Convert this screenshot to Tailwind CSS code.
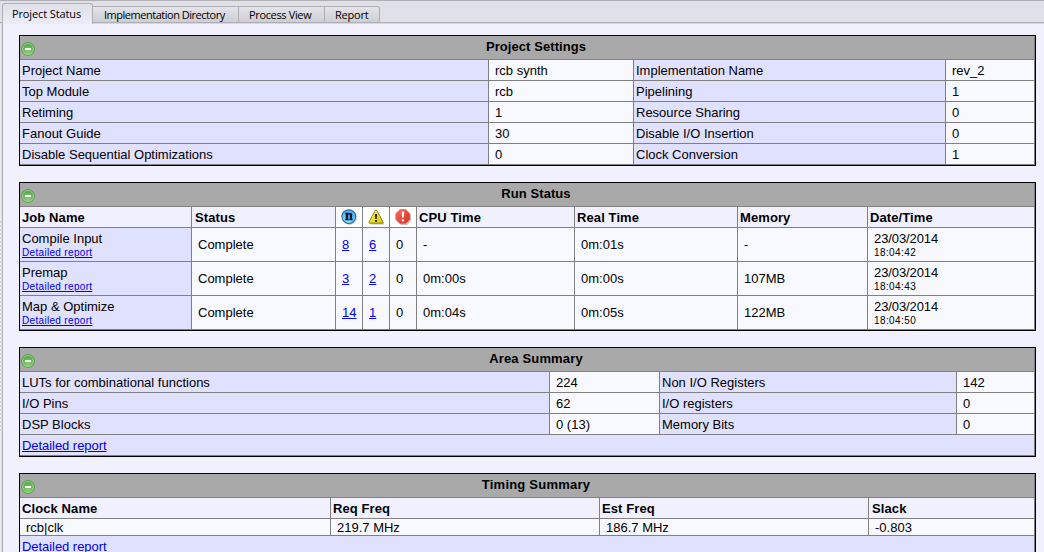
<!DOCTYPE html>
<html lang="en">
<head>
<meta charset="utf-8">
<title>Project Status</title>
<script src="https://cdn.jsdelivr.net/npm/@tailwindcss/browser@4"></script>
</head>
<body class="h-[552px] w-[1044px] overflow-hidden bg-[#f0f0ff] font-['Liberation_Sans',Arial,sans-serif] text-[13px] leading-[22px] text-black">
<svg class="absolute size-0">
  <defs>
    <radialGradient id="gr" cx=".5" cy=".75" r=".75"><stop offset="0" stop-color="#8ccf72"/><stop offset="1" stop-color="#4aa043"/></radialGradient>
    <symbol id="minus" viewBox="0 0 14 14">
      <circle cx="7" cy="7" r="6.5" fill="url(#gr)" stroke="#4d9a47" stroke-width=".8"/>
      <circle cx="7" cy="7" r="5.5" fill="none" stroke="#b5e0a8" stroke-width=".7"/>
      <rect x="4" y="6" width="6" height="2" fill="#fff"/>
    </symbol>
    <linearGradient id="bl" x1="0" y1="0" x2="0" y2="1"><stop offset="0" stop-color="#4fa4e4"/><stop offset="1" stop-color="#7fe6f4"/></linearGradient>
    <linearGradient id="ye" x1="0" y1="0" x2="1" y2="1"><stop offset="0" stop-color="#fff860"/><stop offset="1" stop-color="#d8c400"/></linearGradient>
    <linearGradient id="re" x1="0" y1="0" x2="1" y2="1"><stop offset="0" stop-color="#f87060"/><stop offset="1" stop-color="#d42a20"/></linearGradient>
  </defs>
</svg>
<div class="flex h-[552px] w-[1044px] flex-col overflow-hidden">
  <nav class="flex h-[24px] shrink-0 items-end border-t border-b border-t-[#b0b0b4] border-b-[#d6d6dc] bg-[#e0e0e8] font-['Open_Sans','Noto_Sans',sans-serif] text-[11px]">
    <div class="h-full w-[2px] shrink-0 border-b border-[#b0b0b4]"></div>
    <div class="-mb-px h-[21px] w-[91px] shrink-0 rounded-t-[3px] border border-b-0 border-[#b0b0b4] bg-linear-to-b from-[#e0e0e8] to-[#ececf8] pl-[9px] leading-[20px] tracking-[-0.12px] whitespace-nowrap">Project Status</div>
    <div class="flex h-full grow items-end border-b border-[#b0b0b4]">
      <div class="h-[16px] w-[146px] border-t border-r border-[#b0b0b4] bg-linear-to-b from-[#e4e4ea] to-[#cdcdd4] pl-[11px] leading-[15px] tracking-[-0.48px] whitespace-nowrap">Implementation Directory</div>
      <div class="h-[16px] w-[86px] border-t border-r border-[#b0b0b4] bg-linear-to-b from-[#e4e4ea] to-[#cdcdd4] pl-[10px] leading-[15px] tracking-[-0.35px] whitespace-nowrap">Process View</div>
      <div class="h-[16px] w-[55px] rounded-tr-[3px] border-t border-r border-[#b0b0b4] bg-linear-to-b from-[#e4e4ea] to-[#cdcdd4] pl-[10px] leading-[15px] tracking-[-0.2px] whitespace-nowrap">Report</div>
    </div>
  </nav>
  <div class="flex min-h-0 grow">
  <div class="h-full w-[2px] shrink-0 border-r border-[#dcdce2] bg-[#ececf4] pt-[197px]">
    <div class="h-[212px] w-px bg-[repeating-linear-gradient(to_bottom,#cfcfd4_0_2px,#f4f4f8_2px_4px)]"></div>
  </div>
  <main class="flex grow flex-col gap-4 border-l border-[#b0b0b4] pt-[11px] pl-4">

    <section class="w-[1017px] shrink-0 border border-black bg-[#808080]">
      <header class="grid h-6 grid-cols-[18px_1fr] border-r border-b border-[#808080] bg-[#a9a9a9]">
        <svg class="mt-[6px] ml-px size-[14px]"><use href="#minus"/></svg>
        <h2 class="text-center leading-[22px] font-bold tracking-[0.07px]">Project Settings</h2>
      </header>
      <div class="grid auto-rows-[20px] grid-cols-[468px_144px_311px_88px] gap-px pb-px whitespace-nowrap *:bg-[#f8f8ff] *:pl-[6px] *:odd:bg-[#e0e0ff] *:odd:pl-[2px]">
        <div>Project Name</div><div>rcb synth</div><div>Implementation Name</div><div>rev_2</div>
        <div>Top Module</div><div>rcb</div><div>Pipelining</div><div>1</div>
        <div>Retiming</div><div>1</div><div>Resource Sharing</div><div>0</div>
        <div>Fanout Guide</div><div>30</div><div>Disable I/O Insertion</div><div>0</div>
        <div>Disable Sequential Optimizations</div><div>0</div><div>Clock Conversion</div><div>1</div>
      </div>
    </section>

    <section class="w-[1017px] shrink-0 border border-black bg-[#808080]">
      <header class="grid h-6 grid-cols-[18px_1fr] border-r border-b border-[#808080] bg-[#a9a9a9]">
        <svg class="mt-[6px] ml-px size-[14px]"><use href="#minus"/></svg>
        <h2 class="text-center leading-[22px] font-bold tracking-[0.07px]">Run Status</h2>
      </header>
      <div class="mb-px grid h-5 grid-cols-[171px_143px_26px_26px_26px_157px_162px_129px_166px] gap-px font-bold tracking-[0.1px] whitespace-nowrap *:h-5 *:bg-[#f0f0ff]">
        <div class="pl-[2px]">Job Name</div>
        <div class="pl-[3px]">Status</div>
        <div class="bg-white! pt-[2px] pl-[5px]">
          <svg class="size-4" viewBox="0 0 16 16"><circle cx="8.800" cy="8.800" r="7" fill="#9a9a9a" opacity=".6"/><circle cx="7.800" cy="7.600" r="6.900" fill="url(#bl)" stroke="#2460a8" stroke-width="1.100"/><text x="7.800" y="11.400" text-anchor="middle" font-family="Liberation Serif" font-weight="700" font-size="14" letter-spacing="0" fill="#001028" stroke="#001028" stroke-width=".3">n</text></svg>
        </div>
        <div class="bg-white! pt-[2px] pl-[5px]">
          <svg class="size-4" viewBox="0 0 16 16"><path d="M9.300 2 16 14.200v1.300H2z" fill="#999" opacity=".6"/><path d="M8 .9Q8.600.9 9 1.700L15 13q.5 1.200-.7 1.200H1.700Q.5 14.200 1 13L7 1.700Q7.400.9 8 .9z" fill="url(#ye)" stroke="#8a7c10" stroke-width=".9"/><path d="M7 5h2l-.4 5H7.400z" fill="#111"/><rect x="7.100" y="11" width="1.800" height="1.800" fill="#111"/></svg>
        </div>
        <div class="bg-white! pt-[2px] pl-[5px]">
          <svg class="size-4" viewBox="0 0 16 16"><path d="M6 2h6l4 4v6l-4 4H6l-4-4z" fill="#999" opacity=".6"/><path d="M5 .6h5.600l4.200 4v5.800l-4.200 4.200H5L.8 10.400V4.600z" fill="url(#re)" stroke="#e86055" stroke-width=".7"/><path d="M6.700 2.600h2.500l-.4 6H7.100z" fill="#fff"/><rect x="6.800" y="10.200" width="2.300" height="2.200" rx=".6" fill="#fff"/></svg>
        </div>
        <div class="pl-[2px]">CPU Time</div>
        <div class="pl-[2px]">Real Time</div>
        <div class="pl-[2px]">Memory</div>
        <div class="pl-[2px]">Date/Time</div>
      </div>
      <div class="grid auto-rows-[33px] grid-cols-[171px_143px_26px_26px_26px_157px_162px_129px_166px] gap-px pb-px leading-[33px] whitespace-nowrap *:bg-[#f8f8ff] *:pl-[6px]">
        <div class="flex flex-col bg-[#e0e0ff]! pt-[2px] pl-[2px]!"><span class="h-[17px] leading-[17px]">Compile Input</span><a href="#" class="text-[10px] leading-3 tracking-[0.32px] text-[#0000ee] underline">Detailed report</a></div>
        <div>Complete</div><div><a href="#" class="text-[#0000ee] underline">8</a></div><div><a href="#" class="text-[#0000ee] underline">6</a></div><div>0</div><div>-</div><div>0m:01s</div><div>-</div>
        <div class="flex flex-col pt-[2px]"><span class="h-[17px] leading-[17px] tracking-[-0.1px]">23/03/2014</span><span class="text-[10px] leading-3 tracking-[0.4px]">18:04:42</span></div>

        <div class="flex flex-col bg-[#e0e0ff]! pt-[2px] pl-[2px]!"><span class="h-[17px] leading-[17px]">Premap</span><a href="#" class="text-[10px] leading-3 tracking-[0.32px] text-[#0000ee] underline">Detailed report</a></div>
        <div>Complete</div><div><a href="#" class="text-[#0000ee] underline">3</a></div><div><a href="#" class="text-[#0000ee] underline">2</a></div><div>0</div><div>0m:00s</div><div>0m:00s</div><div>107MB</div>
        <div class="flex flex-col pt-[2px]"><span class="h-[17px] leading-[17px] tracking-[-0.1px]">23/03/2014</span><span class="text-[10px] leading-3 tracking-[0.4px]">18:04:43</span></div>

        <div class="flex flex-col bg-[#e0e0ff]! pt-[2px] pl-[2px]!"><span class="h-[17px] leading-[17px]">Map &amp; Optimize</span><a href="#" class="text-[10px] leading-3 tracking-[0.32px] text-[#0000ee] underline">Detailed report</a></div>
        <div>Complete</div><div><a href="#" class="text-[#0000ee] underline">14</a></div><div><a href="#" class="text-[#0000ee] underline">1</a></div><div>0</div><div>0m:04s</div><div>0m:05s</div><div>122MB</div>
        <div class="flex flex-col pt-[2px]"><span class="h-[17px] leading-[17px] tracking-[-0.1px]">23/03/2014</span><span class="text-[10px] leading-3 tracking-[0.4px]">18:04:50</span></div>
      </div>
    </section>

    <section class="w-[1017px] shrink-0 border border-black bg-[#808080]">
      <header class="grid h-6 grid-cols-[18px_1fr] border-r border-b border-[#808080] bg-[#a9a9a9]">
        <svg class="mt-[6px] ml-px size-[14px]"><use href="#minus"/></svg>
        <h2 class="text-center leading-[22px] font-bold tracking-[0.15px]">Area Summary</h2>
      </header>
      <div class="grid auto-rows-[20px] grid-cols-[529px_109px_296px_77px] gap-px pb-px whitespace-nowrap *:bg-[#f8f8ff] *:pl-[6px] *:odd:bg-[#e0e0ff] *:odd:pl-[2px]">
        <div>LUTs for combinational functions</div><div>224</div><div>Non I/O Registers</div><div>142</div>
        <div>I/O Pins</div><div>62</div><div>I/O registers</div><div>0</div>
        <div>DSP Blocks</div><div>0 (13)</div><div>Memory Bits</div><div>0</div>
        <div class="col-span-4"><a href="#" class="tracking-[-0.05px] text-[#0000ee] underline">Detailed report</a></div>
      </div>
    </section>

    <section class="w-[1017px] shrink-0 border border-black bg-[#808080]">
      <header class="grid h-6 grid-cols-[18px_1fr] border-r border-b border-[#808080] bg-[#a9a9a9]">
        <svg class="mt-[6px] ml-px size-[14px]"><use href="#minus"/></svg>
        <h2 class="text-center leading-[22px] font-bold tracking-[0.22px]">Timing Summary</h2>
      </header>
      <div class="grid grid-cols-[310px_268px_268px_165px] grid-rows-[20px_16px_20px] gap-px pb-px whitespace-nowrap">
        <div class="bg-[#f0f0ff] pl-[2px] font-bold tracking-[0.1px]">Clock Name</div>
        <div class="bg-[#f0f0ff] pl-[2px] font-bold tracking-[0.1px]">Req Freq</div>
        <div class="bg-[#f0f0ff] pl-[2px] font-bold tracking-[0.1px]">Est Freq</div>
        <div class="bg-[#f0f0ff] pl-[3px] font-bold tracking-[0.1px]">Slack</div>
        <div class="bg-[#f8f8ff] pl-[6px] leading-[18px]">rcb|clk</div>
        <div class="bg-[#f8f8ff] pl-[6px] leading-[18px]">219.7 MHz</div>
        <div class="bg-[#f8f8ff] pl-[6px] leading-[18px]">186.7 MHz</div>
        <div class="bg-[#f8f8ff] pl-[6px] leading-[18px]">-0.803</div>
        <div class="col-span-4 bg-[#e0e0ff] pl-[2px]"><a href="#" class="tracking-[-0.05px] text-[#0000ee] underline">Detailed report</a></div>
      </div>
    </section>
  </main>
  </div>
</div>
</body>
</html>
